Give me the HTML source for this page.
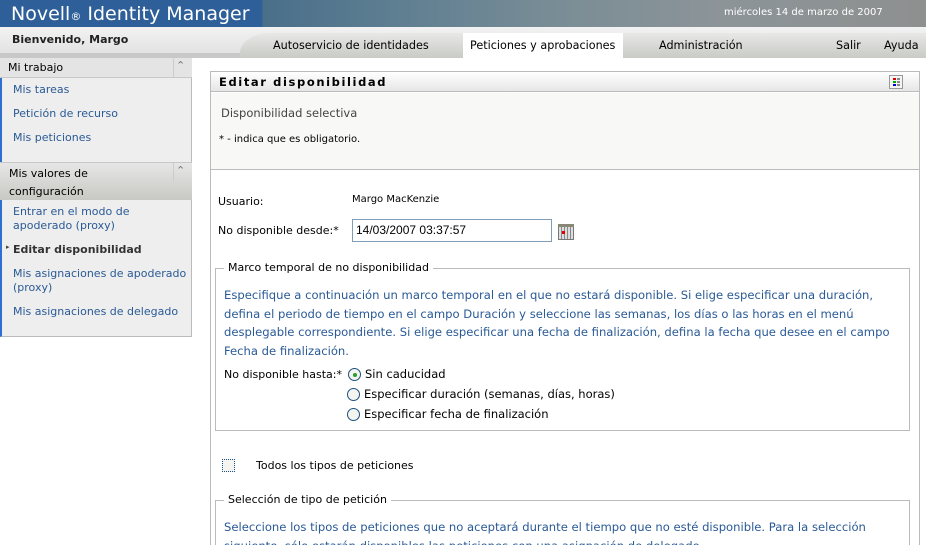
<!DOCTYPE html>
<html style="overflow:hidden;height:545px"><head><meta charset="utf-8"><style>
*{margin:0;padding:0;box-sizing:border-box}
body{width:926px;height:545px;overflow:hidden;background:#fff;font-family:"DejaVu Sans","Liberation Sans",sans-serif;font-size:11px;color:#000;position:relative}
.a{position:absolute;white-space:nowrap}
.blue{color:#2a5a96}
</style></head><body>
<!-- header -->
<div class="a" style="left:0;top:0;width:926px;height:27px;background:linear-gradient(90deg,#2f5f98 0,#2f5f98 262px,#4a6f8a 263px,#5f7f92 400px,#7a8d96 560px,#8c9498 720px,#8e9090 926px)"></div>
<div class="a" style="left:11px;top:3px;font-size:19px;color:#fff">Novell<span style="font-size:11px">®</span> Identity Manager</div>
<div class="a" style="left:724px;top:7px;color:#fff;font-size:10px">miércoles 14 de marzo de 2007</div>
<!-- nav row -->
<div class="a" style="left:0;top:27px;width:926px;height:31px;background:linear-gradient(#f2f2f2,#e0e0e0)"></div>
<div class="a" style="left:0;top:53px;width:926px;height:5px;background:#c8c8c8"></div>
<div class="a" style="left:12px;top:33px;font-weight:bold;font-size:11px;color:#222">Bienvenido, Margo</div>
<div class="a" style="left:240px;top:33px;width:686px;height:25px;background:linear-gradient(#e8e8e6,#c9cbc6);border-top-left-radius:30px 20px"></div>
<div class="a" style="left:463px;top:33px;width:160px;height:25px;background:#fff"></div>
<div class="a" style="left:273px;top:39px;font-size:11.2px">Autoservicio de identidades</div>
<div class="a" style="left:470px;top:39px;font-size:11.2px">Peticiones y aprobaciones</div>
<div class="a" style="left:659px;top:39px;font-size:11.2px">Administración</div>
<div class="a" style="left:836px;top:39px;font-size:11.2px">Salir</div>
<div class="a" style="left:884px;top:39px;font-size:11.2px">Ayuda</div>
<!-- left panel -->
<div class="a" style="left:0;top:58px;width:192px;height:279px;background:#eee;border:1px solid #bbb;border-left:2px solid #2f6fd0"></div>
<div class="a" style="left:0;top:58px;width:192px;height:20px;background:#e4e4e4;border-bottom:1px solid #c8c8c8"></div>
<div class="a" style="left:173px;top:58px;width:1px;height:20px;background:#ccc"></div>
<div class="a" style="left:176px;top:59px;color:#777;font-size:11px">&#8963;</div>
<div class="a" style="left:8px;top:61px">Mi trabajo</div>
<div class="a blue" style="left:13px;top:83px">Mis tareas</div>
<div class="a blue" style="left:13px;top:107px">Petición de recurso</div>
<div class="a blue" style="left:13px;top:131px">Mis peticiones</div>
<div class="a" style="left:0;top:162px;width:192px;height:38px;background:linear-gradient(#e6e6e6,#c8c9c4);border-top:1px solid #c8c8c8"></div>
<div class="a" style="left:173px;top:163px;width:1px;height:18px;background:#ccc"></div>
<div class="a" style="left:176px;top:164px;color:#777">&#8963;</div>
<div class="a" style="left:9px;top:165px;line-height:18px">Mis valores de<br>configuración</div>
<div class="a blue" style="left:13px;top:205px;line-height:14px">Entrar en el modo de<br>apoderado (proxy)</div>
<div class="a" style="left:6px;top:243px;color:#444;font-size:7px">▸</div>
<div class="a" style="left:13px;top:243px;font-weight:bold;color:#333">Editar disponibilidad</div>
<div class="a blue" style="left:13px;top:267px;line-height:14px">Mis asignaciones de apoderado<br>(proxy)</div>
<div class="a blue" style="left:13px;top:305px">Mis asignaciones de delegado</div>
<!-- content panel -->
<div class="a" style="left:210px;top:71px;width:710px;height:474px;border:1px solid #bbb;border-bottom:none"></div>
<div class="a" style="left:211px;top:72px;width:708px;height:20px;background:linear-gradient(#fff,#e6e6e6);border-bottom:1px solid #bbb"></div>
<div class="a" style="left:219px;top:75px;font-weight:bold;letter-spacing:1.6px;font-size:11.5px">Editar disponibilidad</div>
<div class="a" style="left:889px;top:75px;width:14px;height:14px;border:1px solid #999;background:#f4f4f4"></div>
<div class="a" style="left:893px;top:78px;width:3px;height:2px;background:#d00"></div>
<div class="a" style="left:893px;top:81px;width:3px;height:2px;background:#0a0"></div>
<div class="a" style="left:893px;top:84px;width:3px;height:2px;background:#00d"></div>
<div class="a" style="left:897px;top:78px;width:3px;height:8px;background:repeating-linear-gradient(#888 0 2px,transparent 2px 3px)"></div>
<div class="a" style="left:211px;top:93px;width:708px;height:77px;background:#f8f8f6;border-bottom:1px solid #bbb"></div>
<div class="a" style="left:221px;top:106px;color:#444;font-size:11.5px">Disponibilidad selectiva</div>
<div class="a" style="left:219px;top:134px;font-size:10px">* - indica que es obligatorio.</div>
<div class="a" style="left:218px;top:195px">Usuario:</div>
<div class="a" style="left:352px;top:194px;font-size:10px">Margo MacKenzie</div>
<div class="a" style="left:218px;top:224px">No disponible desde:*</div>
<div class="a" style="left:352px;top:219px;width:200px;height:23px;border:1px solid #7f9db9;padding:3px 0 0 3px;font-family:'Liberation Sans',sans-serif;font-size:12px">14/03/2007 03:37:57</div>
<div class="a" style="left:558px;top:224px;width:16px;height:16px;border:1px solid #777;background:repeating-linear-gradient(90deg,#ddd 0 2px,#888 2px 3px),#ddd"></div>
<div class="a" style="left:558px;top:224px;width:16px;height:3px;background:#887"></div>
<div class="a" style="left:562px;top:231px;width:3px;height:3px;background:#d00"></div>
<!-- fieldset 1 -->
<div class="a" style="left:215px;top:268px;width:695px;height:163px;border:1px solid #bbb"></div>
<div class="a" style="left:224px;top:261px;background:#fff;padding:0 4px;font-size:11px">Marco temporal de no disponibilidad</div>
<div class="a blue" style="left:224px;top:286px;line-height:18.5px;font-size:11.6px">Especifique a continuación un marco temporal en el que no estará disponible. Si elige especificar una duración,<br>defina el periodo de tiempo en el campo Duración y seleccione las semanas, los días o las horas en el menú<br>desplegable correspondiente. Si elige especificar una fecha de finalización, defina la fecha que desee en el campo<br>Fecha de finalización.</div>
<div class="a" style="left:224px;top:368px">No disponible hasta:*</div>
<div class="a" style="left:348px;top:368px;width:13px;height:13px;border-radius:50%;border:1px solid #1c5180;background:#f4f4f0"></div>
<div class="a" style="left:353px;top:373px;width:4px;height:4px;border-radius:50%;background:#2aa02a"></div>
<div class="a" style="left:365px;top:367px;font-size:11.5px">Sin caducidad</div>
<div class="a" style="left:347px;top:388px;width:13px;height:13px;border-radius:50%;border:1px solid #1c5180;background:#f4f4f0"></div>
<div class="a" style="left:364px;top:387px;font-size:11.5px">Especificar duración (semanas, días, horas)</div>
<div class="a" style="left:347px;top:408px;width:13px;height:13px;border-radius:50%;border:1px solid #1c5180;background:#f4f4f0"></div>
<div class="a" style="left:364px;top:407px;font-size:11.5px">Especificar fecha de finalización</div>
<!-- checkbox -->
<div class="a" style="left:222px;top:459px;width:13px;height:13px;border:1px dotted #1c5180;background:#f4f4f0"></div>
<div class="a" style="left:256px;top:459px">Todos los tipos de peticiones</div>
<!-- fieldset 2 -->
<div class="a" style="left:215px;top:500px;width:695px;height:45px;border:1px solid #bbb;border-bottom:none"></div>
<div class="a" style="left:224px;top:493px;background:#fff;padding:0 4px">Selección de tipo de petición</div>
<div class="a blue" style="left:224px;top:518px;line-height:18.5px;font-size:11.6px">Seleccione los tipos de peticiones que no aceptará durante el tiempo que no esté disponible. Para la selección<br>siguiente, sólo estarán disponibles las peticiones con una asignación de delegado.</div>
</body></html>
